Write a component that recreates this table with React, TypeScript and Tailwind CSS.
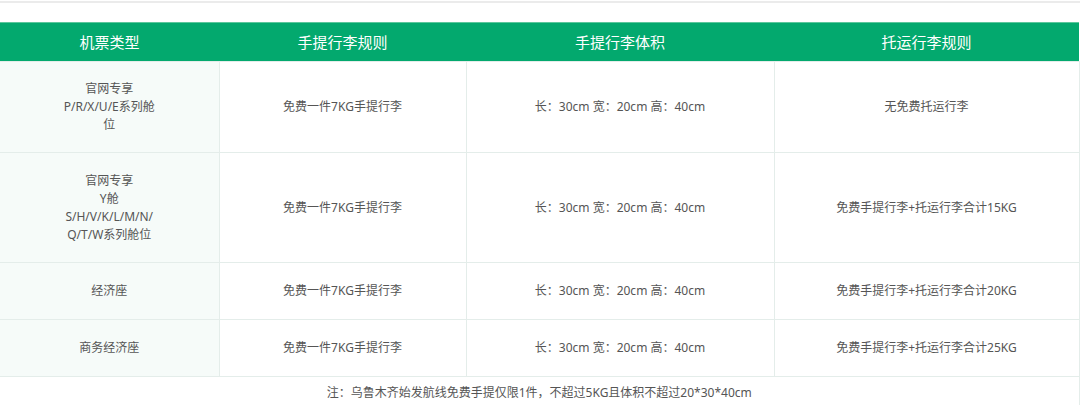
import React from 'react';

const rows = [
  {
    type: ['官网专享', 'P/R/X/U/E系列舱', '位'],
    hand: '免费一件7KG手提行李',
    size: '长：30cm 宽：20cm 高：40cm',
    check: '无免费托运行李',
    h: 'h-[91px]',
  },
  {
    type: ['官网专享', 'Y舱', 'S/H/V/K/L/M/N/', 'Q/T/W系列舱位'],
    hand: '免费一件7KG手提行李',
    size: '长：30cm 宽：20cm 高：40cm',
    check: '免费手提行李+托运行李合计15KG',
    h: 'h-[110px]',
  },
  {
    type: ['经济座'],
    hand: '免费一件7KG手提行李',
    size: '长：30cm 宽：20cm 高：40cm',
    check: '免费手提行李+托运行李合计20KG',
    h: 'h-[57px]',
  },
  {
    type: ['商务经济座'],
    hand: '免费一件7KG手提行李',
    size: '长：30cm 宽：20cm 高：40cm',
    check: '免费手提行李+托运行李合计25KG',
    h: 'h-[57px]',
  },
];

const App = () => {
  return (
    <div
      className="w-[1080px] h-[405px] bg-white overflow-hidden text-[#555]"
      style={{ fontFamily: '"Noto Sans", "Noto Sans CJK SC", sans-serif' }}
    >
      <div className="h-[2px] mt-[1px] bg-[#ebebeb]" />
      <table className="mt-[19px] w-[1079px] border-collapse table-fixed text-[12px] leading-[18px]">
        <colgroup>
          <col className="w-[219px]" />
          <col className="w-[247px]" />
          <col className="w-[308px]" />
          <col className="w-[305px]" />
        </colgroup>
        <thead>
          <tr className="h-[39px] bg-[#03a96e] text-white text-[15px] border-t border-[#5cc79c]">
            <th className="font-normal">机票类型</th>
            <th className="font-normal">手提行李规则</th>
            <th className="font-normal">手提行李体积</th>
            <th className="font-normal">托运行李规则</th>
          </tr>
        </thead>
        <tbody>
          {rows.map((r, i) => (
            <tr key={i} className={r.h}>
              <td className="bg-[#f6fbf9] border border-l-0 border-[#e4edea] text-center align-middle">
                {r.type.map((t, j) => (
                  <div key={j}>{t}</div>
                ))}
              </td>
              <td className="border border-[#e4edea] text-center">{r.hand}</td>
              <td className="border border-[#e4edea] text-center">{r.size}</td>
              <td className="border border-[#e4edea] text-center">{r.check}</td>
            </tr>
          ))}
          <tr className="h-[29px]">
            <td colSpan={4} className="border border-l-0 border-[#e4edea] text-center pt-[3px]">
              注：乌鲁木齐始发航线免费手提仅限1件，不超过5KG且体积不超过20*30*40cm
            </td>
          </tr>
        </tbody>
      </table>
    </div>
  );
};

export default App;
